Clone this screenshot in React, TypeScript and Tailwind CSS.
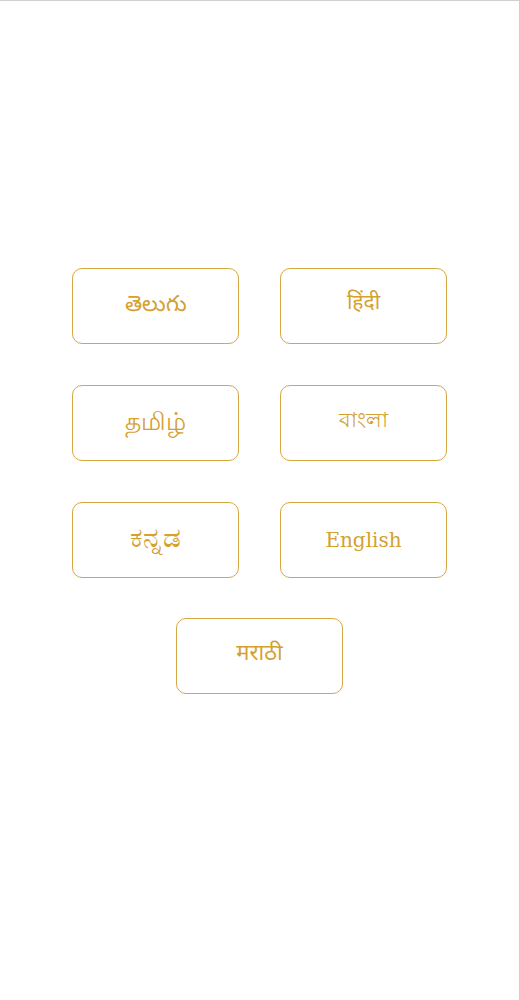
import React from "react";

const langs: { label: string; cls: string }[] = [
  { label: "తెలుగు", cls: "text-[22px] -translate-y-[3px]" },
  { label: "हिंदी", cls: "text-[21px] -translate-y-[3px]" },
  { label: "தமிழ்", cls: "text-[25px] -translate-y-[1px]" },
  { label: "বাংলা", cls: "text-[21px] -translate-y-[2px]" },
  { label: "ಕನ್ನಡ", cls: "text-[28px] -translate-y-[2px]" },
  { label: "English", cls: "text-[20px]" },
];

function Btn({ label, cls }: { label: string; cls: string }) {
  return (
    <button className="w-[167px] h-[76px] rounded-[10px] border border-[#d6a844] bg-white flex items-center justify-center text-[#d4a030] font-['DejaVu_Serif','Noto_Sans',serif]">
      <span className={cls}>{label}</span>
    </button>
  );
}

export default function App() {
  return (
    <div className="w-[520px] h-[1000px] bg-white border-t border-r border-[#cfcfcf] flex flex-col items-center pt-[267px]">
      <div className="grid grid-cols-2 gap-x-[41px] gap-y-[41px]">
        {langs.map((l) => (
          <Btn key={l.label} label={l.label} cls={l.cls} />
        ))}
      </div>
      <div className="mt-[40px]">
        <Btn label="मराठी" cls="text-[22px] -translate-y-[4px]" />
      </div>
    </div>
  );
}
